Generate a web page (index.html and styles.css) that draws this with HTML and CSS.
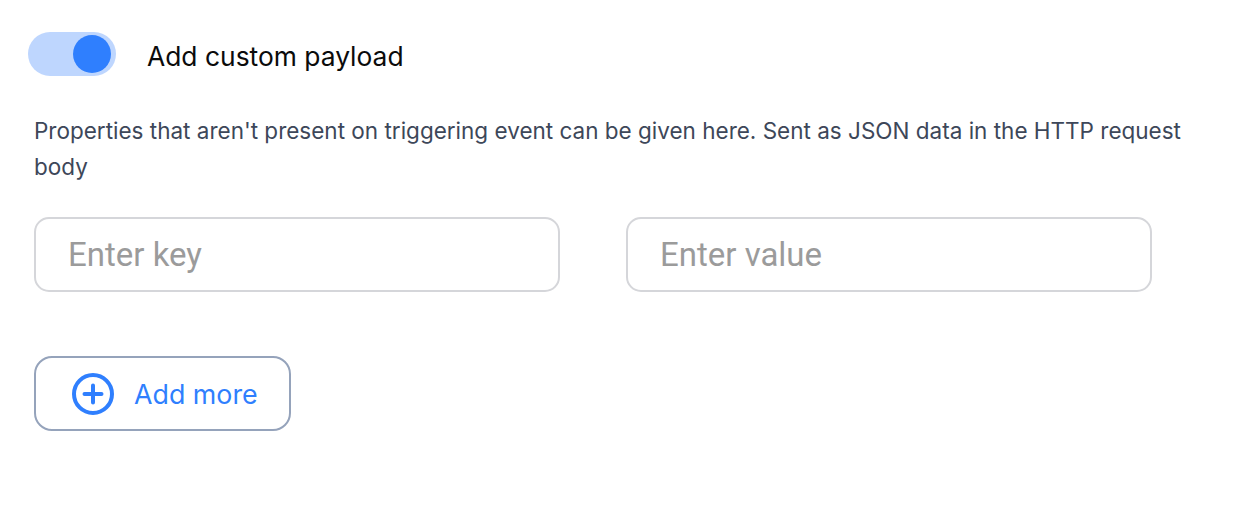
FILE: index.html
```html
<!DOCTYPE html>
<html>
<head>
<meta charset="utf-8">
<link rel="stylesheet" href="styles.css">
</head>
<body>
<div class="panel">
  <div class="toggle-row">
    <div class="toggle"><div class="knob"></div></div>
    <span class="toggle-label">Add custom payload</span>
  </div>
  <p class="desc">Properties that aren't present on triggering event can be given here. Sent as JSON data in the HTTP request body</p>
  <div class="fields">
    <div class="field">Enter key</div>
    <div class="field">Enter value</div>
  </div>
  <button class="add-btn">
    <svg class="plus" width="42" height="42" viewBox="0 0 42 42">
      <circle cx="21" cy="21" r="19" fill="none" stroke="#2f7ffe" stroke-width="4"/>
      <path d="M21 12.5v17M12.5 21h17" stroke="#2f7ffe" stroke-width="4" stroke-linecap="round"/>
    </svg>
    <span>Add more</span>
  </button>
</div>
</body>
</html>
```
FILE: styles.css
```css
html, body { margin: 0; padding: 0; background: #fff; }
.panel {
  width: 1185px;
  padding: 32px 0 0 34px;
  font-family: Inter, "Noto Sans", sans-serif;
}
.toggle-row {
  display: flex;
  align-items: center;
  margin-left: -6px;
  height: 44px;
}
.toggle {
  width: 88px;
  height: 44px;
  border-radius: 22px;
  background: #bed6fe;
  display: flex;
  justify-content: flex-end;
  align-items: center;
  padding-right: 5px;
  box-sizing: border-box;
}
.knob {
  width: 38px;
  height: 38px;
  border-radius: 50%;
  background: #2f7ffe;
}
.toggle-label {
  margin-left: 31px;
  margin-top: 4px;
  font-size: 26.4px;
  color: #0b0b0b;
  font-weight: 400;
}
.desc {
  margin: 37px 0 0 0;
  font-size: 22.5px;
  line-height: 36px;
  color: #3d4759;
}
.fields {
  display: flex;
  gap: 66px;
  margin-top: 32px;
}
.field {
  width: 526px;
  height: 75px;
  box-sizing: border-box;
  border: 2px solid #d5d6da;
  border-radius: 15px;
  display: flex;
  align-items: center;
  padding-left: 32px;
  font-family: Roboto, sans-serif;
  font-size: 33px;
  color: #9b9b9b;
}
.add-btn {
  margin-top: 64px;
  width: 257px;
  height: 75px;
  box-sizing: border-box;
  border: 2px solid #95a3bb;
  border-radius: 18px;
  background: #fff;
  display: flex;
  align-items: center;
  padding: 0 0 0 36px;
  font-family: Inter, sans-serif;
  font-size: 26.8px;
  color: #2f7ffe;
  cursor: pointer;
}
.add-btn span { margin-left: 20px; }
.plus { display: block; }
```
